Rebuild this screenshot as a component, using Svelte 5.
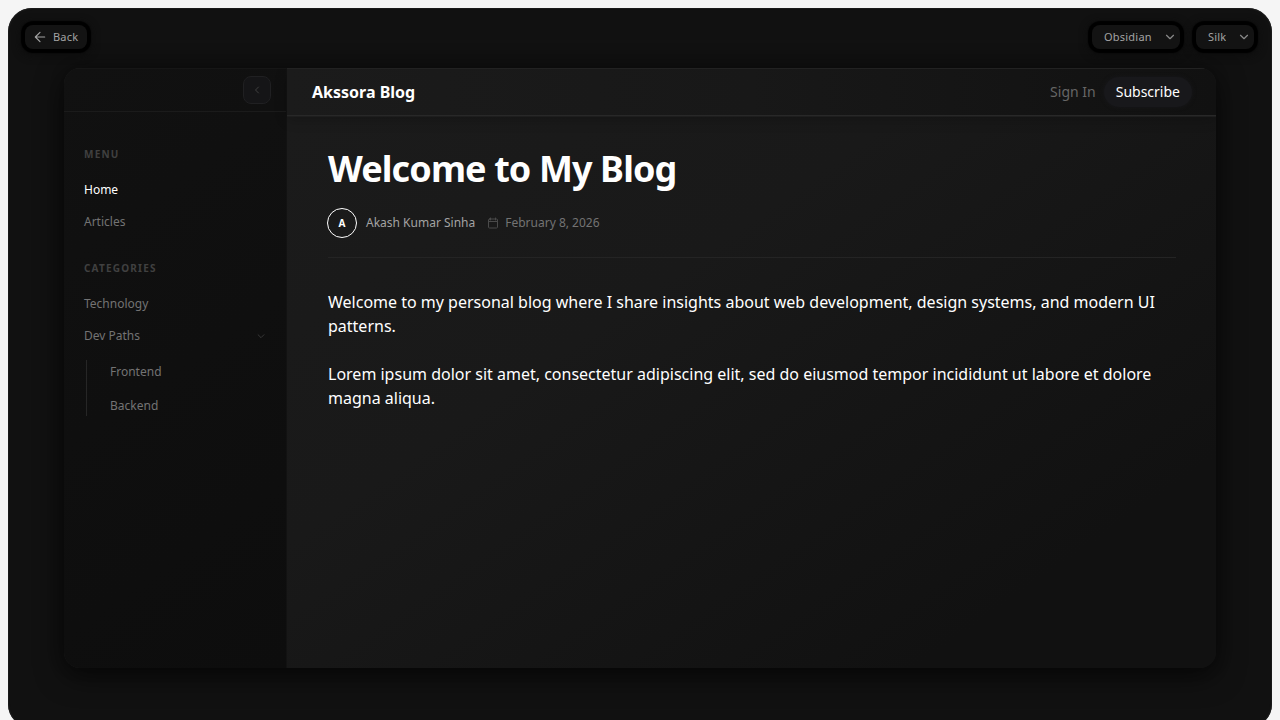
<script lang="ts">
    let theme = $state('Obsidian');
    let finish = $state('Silk');
    let collapsed = $state(false);
    let pathsOpen = $state(true);
</script>

<div class="stage">
    <div class="toolbar">
        <button type="button" class="pill back">
            <svg width="14" height="14" viewBox="0 0 24 24" aria-hidden="true"><path d="M20 12H4M12 4l-8 8 8 8" /></svg>
            Back
        </button>

        <div class="pickers">
            <div class="pill picker">
                <select class="theme" aria-label="Theme" bind:value={theme}>
                    <option>Obsidian</option>
                    <option>Graphite</option>
                </select>
                <svg width="14" height="14" viewBox="0 0 24 24" aria-hidden="true"><path d="m6 9 6 6 6-6" /></svg>
            </div>
            <div class="pill picker">
                <select class="finish" aria-label="Finish" bind:value={finish}>
                    <option>Silk</option>
                    <option>Matte</option>
                </select>
                <svg width="14" height="14" viewBox="0 0 24 24" aria-hidden="true"><path d="m6 9 6 6 6-6" /></svg>
            </div>
        </div>
    </div>

    <div class="window">
        <aside class="sidebar" class:collapsed>
            <div class="sidebar-head">
                <button type="button" class="collapse" aria-label="Toggle sidebar" onclick={() => (collapsed = !collapsed)}>
                    <svg width="12" height="12" viewBox="0 0 24 24" aria-hidden="true"><path d="m15 6-6 6 6 6" /></svg>
                </button>
            </div>

            <nav>
                <h2>Menu</h2>
                <a href="#home" class="active">Home</a>
                <a href="#articles">Articles</a>

                <h2>Categories</h2>
                <a href="#technology">Technology</a>
                <button type="button" class="group" aria-expanded={pathsOpen} onclick={() => (pathsOpen = !pathsOpen)}>
                    Dev Paths
                    <svg width="10" height="10" viewBox="0 0 24 24" aria-hidden="true"><path d="m5 9 7 7 7-7" /></svg>
                </button>
                {#if pathsOpen}
                    <div class="sub">
                        <a href="#frontend">Frontend</a>
                        <a href="#backend">Backend</a>
                    </div>
                {/if}
            </nav>
        </aside>

        <div class="content">
            <header>
                <span class="brand">Akssora Blog</span>
                <div class="actions">
                    <button type="button" class="sign-in">Sign In</button>
                    <button type="button" class="subscribe">Subscribe</button>
                </div>
            </header>

            <main>
                <h1>Welcome to My Blog</h1>
                <div class="meta">
                    <span class="avatar">A</span>
                    <span class="author">Akash Kumar Sinha</span>
                    <svg width="12" height="12" viewBox="0 0 24 24" aria-hidden="true">
                        <rect x="3" y="4" width="18" height="18" rx="2" />
                        <path d="M17 2v4M7 2v4M3 9h18" />
                    </svg>
                    <time datetime="2026-02-08">February 8, 2026</time>
                </div>
                <p>Welcome to my personal blog where I share insights about web development, design systems, and modern UI patterns.</p>
                <p>Lorem ipsum dolor sit amet, consectetur adipiscing elit, sed do eiusmod tempor incididunt ut labore et dolore magna aliqua.</p>
            </main>
        </div>
    </div>
</div>

<style>
    :global(body) {
        background: #f5f5f5;
        font-family: "Noto Sans", sans-serif;
    }

    * { box-sizing: border-box; }

    button, select {
        font-family: inherit;
        background: none;
        border: 0;
        padding: 0;
        cursor: pointer;
    }

    a { text-decoration: none; }

    svg {
        fill: none;
        stroke: currentColor;
        stroke-width: 2;
        stroke-linecap: round;
        stroke-linejoin: round;
        flex-shrink: 0;
    }

    .stage {
        min-height: 100vh;
        margin: 8px;
        padding: 17px 56px 60px;
        background: #111;
        border-radius: 24px;
        box-shadow: inset 0 0 1px 1px #1c1c1c;
    }

    .toolbar {
        display: flex;
        justify-content: space-between;
        align-items: flex-start;
        height: 43px;
        margin: 0 -38px 0 -39px;
    }

    .pickers {
        display: flex;
        gap: 16px;
    }

    .pill {
        display: flex;
        align-items: center;
        height: 24px;
        border-radius: 8px;
        background: #131313;
        box-shadow: 0 0 1px 4px #000, 0 2px 8px 4px #0c0c0c;
        color: #a3a3a3;
        font-size: 11px;
        line-height: 14px;
        letter-spacing: 0.02em;
    }

    .back {
        gap: 6px;
        padding: 0 9px 1px 8px;
    }

    .picker { position: relative; }

    .picker select {
        appearance: none;
        height: 24px;
        padding: 0 28px 2px 12px;
        color: inherit;
        font-size: 11px;
        letter-spacing: inherit;
        outline: none;
    }

    .picker svg {
        position: absolute;
        right: 3px;
        color: #8a8a8a;
        pointer-events: none;
    }

    .theme { width: 88px; }
    .finish { width: 58px; }

    .window {
        display: flex;
        min-height: 600px;
        border-radius: 16px;
        overflow: hidden;
        background: linear-gradient(145deg, #1c1c1c, #191919 45%, #111 85%);
        box-shadow: 0 8px 28px #00000099, 0 0 14px #00000040;
    }

    .sidebar {
        width: 223px;
        flex-shrink: 0;
        background: linear-gradient(145deg, #111, #0d0d0d);
        border-top: 1px solid #161616;
        border-right: 1px solid #121212;
    }

    .sidebar-head {
        display: flex;
        justify-content: flex-end;
        align-items: center;
        height: 43px;
        padding-right: 15px;
        border-bottom: 1px solid #1b1b1b;
    }

    .collapse {
        display: flex;
        align-items: center;
        justify-content: center;
        width: 28px;
        height: 28px;
        border: 1px solid #202022;
        border-radius: 8px;
        background: #151517;
        color: #404040;
    }

    .collapsed { width: 60px; }
    .collapsed nav { display: none; }

    nav {
        display: flex;
        flex-direction: column;
        padding: 34px 20px 0;
    }

    h2 {
        margin: 0 0 12px;
        font-size: 10px;
        line-height: 16px;
        font-weight: 700;
        letter-spacing: 0.12em;
        text-transform: uppercase;
        color: #404040;
    }

    a + h2 { margin-top: 22px; }

    nav a, .group {
        font-size: 12px;
        line-height: 16px;
        padding: 8px 0;
        color: #737373;
    }

    nav .active { color: #fff; }

    .group {
        display: flex;
        align-items: center;
        justify-content: space-between;
        text-align: left;
    }

    .group svg { color: #404040; }

    .sub {
        display: flex;
        flex-direction: column;
        gap: 2px;
        margin: 8px 0 0 2px;
        height: 56px;
        border-left: 1px solid #262626;
        padding-left: 23px;
    }

    .sub a { padding: 4px 0 12px; line-height: 16px; }

    .content {
        flex: 1;
        min-width: 0;
        border-top: 1px solid #242424;
    }

    header {
        display: flex;
        align-items: center;
        justify-content: space-between;
        height: 47px;
        padding: 0 24px 0 25px;
        background: linear-gradient(90deg, #1b1b1b, #181818 50%, #111);
        border-bottom: 1px solid #282828;
        box-shadow: 0 1px 0 #1e1e1e, 0 4px 12px #00000033;
    }

    .brand {
        color: #fff;
        font-size: 16px;
        font-weight: 700;
    }

    .actions { display: flex; align-items: center; }

    .actions button {
        height: 30px;
        padding: 0 8px;
        font-size: 14px;
        line-height: 18px;
        color: #666;
    }

    .actions .subscribe {
        padding: 0 12px;
        border-radius: 16px;
        color: #fff;
        background: #18181b;
        box-shadow: 0 0 4px #18181b;
    }

    main { padding: 30px 40px 40px 41px; }

    h1 {
        margin: 0;
        color: #fff;
        font-size: 36px;
        line-height: 45px;
        font-weight: 700;
        letter-spacing: -0.025em;
    }

    .meta {
        display: flex;
        align-items: center;
        padding: 17px 0 19px;
        margin-bottom: 32px;
        border-bottom: 1px solid #242424;
        font-size: 12px;
        line-height: 16px;
        color: #737373;
    }

    .avatar {
        display: flex;
        align-items: center;
        justify-content: center;
        width: 30px;
        height: 30px;
        margin: 0 9px 0 -1px;
        border: 1px solid #fff;
        border-radius: 50%;
        color: #fff;
        font-size: 10px;
        font-weight: 700;
    }

    .author { color: #a3a3a3; margin-right: 12px; }
    .meta svg { color: #4a4a4a; margin-right: 6px; }

    p {
        margin: 0 0 24px;
        color: #fff;
        font-size: 16px;
        line-height: 24px;
    }
</style>
